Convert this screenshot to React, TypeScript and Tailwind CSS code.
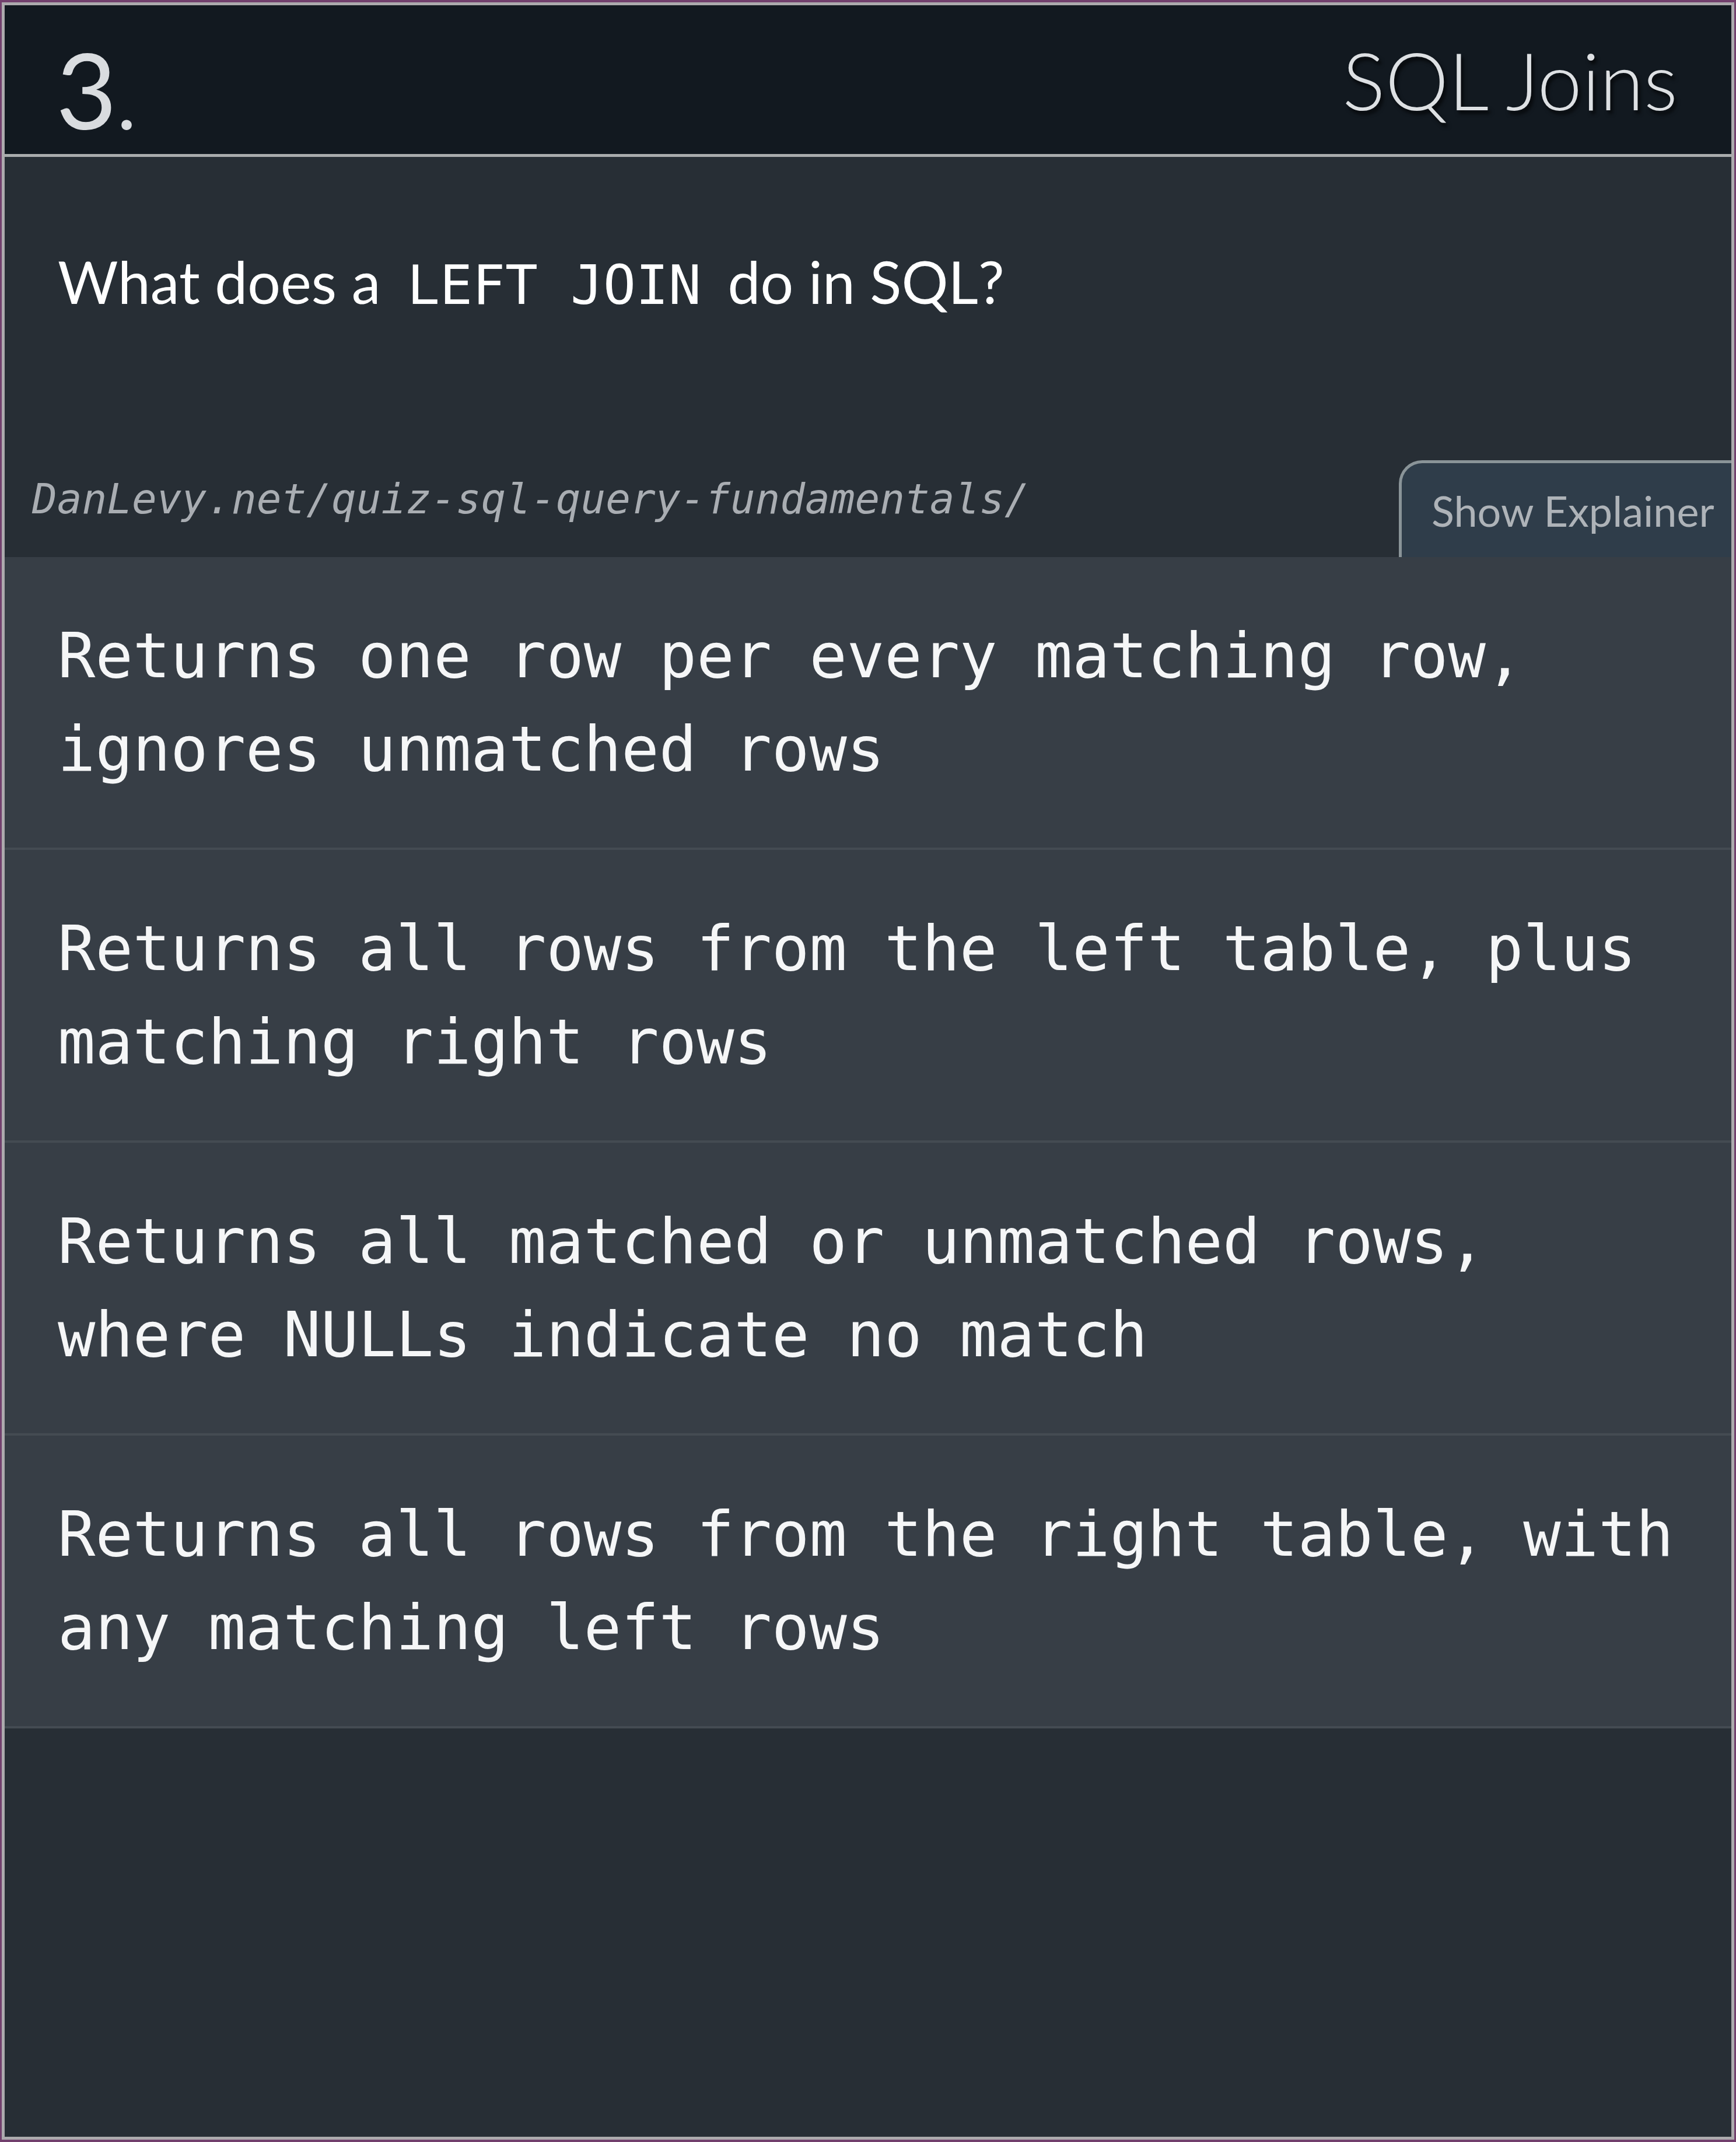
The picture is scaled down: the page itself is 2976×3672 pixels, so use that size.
import React from "react";

const options = [
  "Returns one row per every matching row, ignores unmatched rows",
  "Returns all rows from the left table, plus matching right rows",
  "Returns all matched or unmatched rows, where NULLs indicate no match",
  "Returns all rows from the right table, with any matching left rows",
];

export default function App() {
  return (
    <div className="w-[2976px] h-[3672px] bg-[#72406d] px-[3px] py-[4px]">
      <div className="h-full flex flex-col border-[5px] border-[#acaaad] bg-[#272e35]">
        <header className="h-[260px] shrink-0 bg-[#121920] border-b-[5px] border-[#a9acad] flex items-center justify-between pl-[88px] pr-[92px]">
          <div
            className="text-[#d9dcdf] text-[180px] leading-none mt-[30px]"
            style={{ fontFamily: "Lato, 'Noto Sans', sans-serif" }}
          >
            3<span className="text-[140px]">.</span>
          </div>
          <div
            className="text-[#dde0e3] text-[137px] leading-none font-light [text-shadow:4px_6px_6px_rgba(0,0,0,0.7)]"
            style={{ fontFamily: "Lato, 'Noto Sans', sans-serif" }}
          >
            SQL Joins
          </div>
        </header>

        <section className="h-[686px] shrink-0 bg-[#272e35] flex flex-col justify-between">
          <div
            className="pl-[91px] pt-[138px] text-white text-[100px] leading-[1.5]"
            style={{ fontFamily: "Lato, 'Noto Sans', sans-serif" }}
          >
            What does a{" "}
            <code
              className="px-[20px] text-[93px]"
              style={{ fontFamily: "'DejaVu Sans Mono', monospace" }}
            >
              LEFT JOIN
            </code>{" "}
            do in SQL?
          </div>
          <div className="flex items-end justify-between">
            <div
              className="pl-[47px] pb-[64px] italic text-[#a9adb2] text-[71px] leading-none"
              style={{ fontFamily: "'DejaVu Sans Mono', monospace" }}
            >
              DanLevy.net/quiz-sql-query-fundamentals/
            </div>
            <button
              className="w-[570px] h-[166px] bg-[#2f3d4a] border-l-[5px] border-t-[5px] border-[#8a9498] rounded-tl-[40px] flex items-center pl-[51px] text-[#aeb3b8] text-[72px]"
              style={{ fontFamily: "Lato, 'Noto Sans', sans-serif" }}
            >
              Show Explainer
            </button>
          </div>
        </section>

        <div className="shrink-0 flex flex-col">
          {options.map((o) => (
            <div
              key={o}
              className="bg-[#373e46] border-b-[4px] border-[#444b52] pl-[91px] pr-[60px] py-[89px] text-[#f5f6f7] text-[107px] leading-[160px]"
              style={{ fontFamily: "'DejaVu Sans Mono', monospace" }}
            >
              {o}
            </div>
          ))}
        </div>

        <div className="flex-1 bg-[#272e35]" />
      </div>
    </div>
  );
}
